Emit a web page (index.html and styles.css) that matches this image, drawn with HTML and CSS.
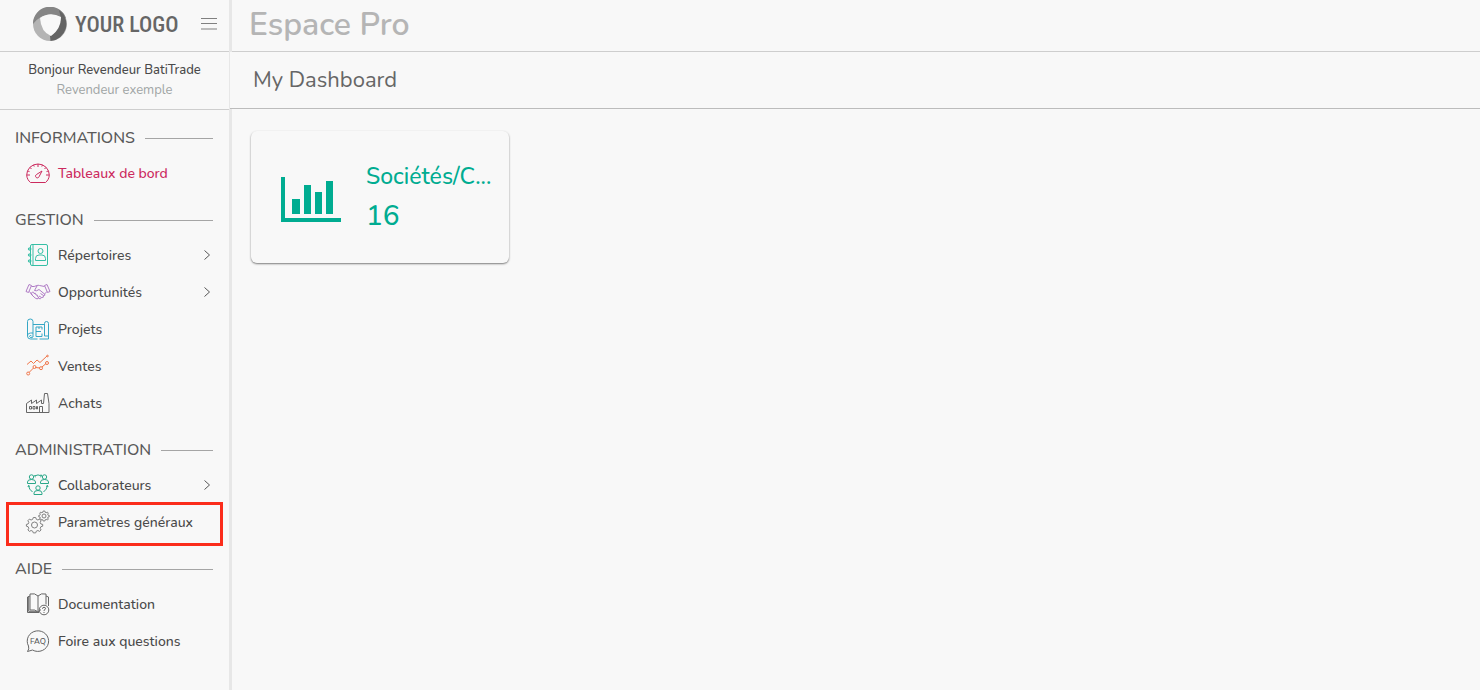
FILE: index.html
```html
<!DOCTYPE html>
<html lang="fr">
<head>
  <meta charset="UTF-8" />
  <meta name="viewport" content="width=device-width, initial-scale=1.0" />
  <title>Espace Pro</title>
  <link rel="stylesheet" href="styles.css">
</head>
<body>
  <aside class="sidebar">
    <div class="brand">
      <a href="#" class="logo">
        <svg width="34" height="34" viewBox="0 0 34 34">
          <circle cx="17" cy="17" r="17" fill="#b4b4b4" />
          <path d="M0 17A17 17 0 0 1 33 11L27 10Q17 5 8 10Q4 12 0 17Z" fill="#858585" />
          <path d="M26 3A17 17 0 0 1 17.500 34L17 29Q25 26 28 11Z" fill="#646464" />
          <path d="M7 11Q17 4 28 10Q28 22 18 29Q8 25 7 11Z" fill="#f8f8f8" />
        </svg>
        <span>YOUR LOGO</span>
      </a>
      <button class="menu-btn" aria-label="Menu">
        <svg width="16" height="12" viewBox="0 0 16 12" stroke="#808080"><path d="M0 .5H16M0 5.500H16M0 11H16" /></svg>
      </button>
    </div>
    <div class="user">
      <div class="user-name">Bonjour Revendeur BatiTrade</div>
      <div class="user-role">Revendeur exemple</div>
    </div>
    <nav>
      <h3>INFORMATIONS</h3>
      <a href="#" class="item active">
        <svg class="icon pink" viewBox="0 0 24 24">
          <path d="M4.500 21.500H19.500C21.500 20 23.300 17 23.300 14A11.300 11 0 0 0 .7 14C.7 17 2.500 20 4.500 21.500Z" />
          <path d="M12 3V6M1 14H4M20 14H23M4 6.500L5.500 8M20 6.500L18.500 8M7.500 4L8.200 5.500M16.500 4L15.800 5.500M2 10L3.500 10.600M22 10L20.500 10.600M16 10L10.500 13.500A1.800 1.800 0 1 0 13 15.800Z" />
        </svg>
        <span>Tableaux de bord</span>
      </a>

      <h3>GESTION</h3>
      <a href="#" class="item">
        <svg class="icon teal" viewBox="0 0 24 24">
          <rect x="4.500" y="1.500" width="17" height="21" rx="1.500" />
          <path d="M7 1.500V22.500M2.500 6H5.500M2.500 12H5.500M2.500 18H5.500" />
          <circle cx="3.500" cy="6" r="1.200" /><circle cx="3.500" cy="12" r="1.200" /><circle cx="3.500" cy="18" r="1.200" />
          <circle cx="14.500" cy="8" r="2.500" />
          <path d="M9.500 17.500V15.500Q9.500 12 13 12H16Q19.500 12 19.500 15.500V17.500Z" />
        </svg>
        <span>Répertoires</span>
        <svg class="arrow" viewBox="0 0 6 10"><path d="M.5 .5L5.500 5L.5 9.500" /></svg>
      </a>
      <a href="#" class="item">
        <svg class="icon purple" viewBox="0 0 24 24">
          <path d="M3 4.500L0 11.500L2.500 12.500L5.500 5.500ZM21 4.500L24 11.500L21.500 12.500L18.500 5.500Z" />
          <path d="M5.500 6.500Q8 7 11 5.500Q12 5 13.500 5.500L18.500 6.500M3.500 11.500L6 15M21 11.500L18.500 14L13 9.500Q10.500 11.500 8.500 10.500L11 6" />
          <path d="M6 15Q4.500 13 6.500 12Q8 11.800 8 13.500Q10 12.500 10 15Q12 14.500 11.500 16.500Q13.500 16.500 12 18.500Q10.500 20 6 15ZM12.500 18.500Q15 19.500 15.500 17.500Q18 18 17.500 15.500Q20 15.500 18.500 14M13 16L15.500 17.500M14.500 13.500L17.500 15.500" />
        </svg>
        <span>Opportunités</span>
        <svg class="arrow" viewBox="0 0 6 10"><path d="M.5 .5L5.500 5L.5 9.500" /></svg>
      </a>
      <a href="#" class="item">
        <svg class="icon blue" viewBox="0 0 24 24">
          <path d="M1.500 19V4.500Q1.500 2 4.300 2Q7 2 7 4.500V16Q1.500 15.500 1.500 19Q1.500 22 4.500 22H11.500M13.500 22H22.500V6.500Q22.500 4.500 20.500 4.500Q18.500 4.500 18.500 6.500V19" />
          <path d="M7 7.500H18.500M7 16V20Q4.500 22 3.500 19.500Q4 17.500 5.500 19M18.500 19H22M16 10H10V19.500H16M10 14.500H15M16 10V12.500M16 16.500V19.500M13 10V12" />
        </svg>
        <span>Projets</span>
      </a>
      <a href="#" class="item">
        <svg class="icon orange" viewBox="0 0 24 24">
          <path d="M1 10.500L5 7L7.500 9.500L11 6L14 8.500L21 2M3 18.500L7.500 14M9.500 13.500L14 14M16 13L20 9.500" />
          <circle cx="21.500" cy="2" r=".8" />
          <circle cx="2.200" cy="19.500" r="1.500" /><circle cx="8.500" cy="13" r="1.500" /><circle cx="15" cy="14.200" r="1.500" /><circle cx="21" cy="9" r="1.500" />
        </svg>
        <span>Ventes</span>
      </a>
      <a href="#" class="item">
        <svg class="icon" viewBox="0 0 24 24">
          <path d="M.5 21.500V12.500L5.500 9V12.500L10.500 9V12.500L15.500 9V12.500H17.500L18.500 2.500H21.500L23 12.500V21.500Z" />
          <path d="M3.500 15.500H5.500V18H3.500ZM7 15.500H9V18H7ZM10.500 15.500H11.500V18H10.500ZM13.500 21.500V15.500H16.500V21.500" />
        </svg>
        <span>Achats</span>
      </a>

      <h3>ADMINISTRATION</h3>
      <a href="#" class="item">
        <svg class="icon green" viewBox="0 0 24 24">
          <circle cx="5.500" cy="4" r="2.200" /><circle cx="18.500" cy="4" r="2.200" /><circle cx="12" cy="15" r="2.200" />
          <path d="M1.500 10.500V9Q1.500 6.500 5.500 6.500Q9.500 6.500 9.500 9V10.500ZM14.500 10.500V9Q14.500 6.500 18.500 6.500Q22.500 6.500 22.500 9V10.500ZM8 21.500V20Q8 17.500 12 17.500Q16 17.500 16 20V21.500Z" />
          <path d="M8.500 3Q12 .8 15.500 3M2.500 12.500Q3 16.500 6.500 19M21.500 12.500Q21 16.500 17.500 19M9.500 2L8.500 3L9.700 4M15 1.500L15.500 3L14.300 4M2 14L2.500 12.500L4 13.500M22 14L21.500 12.500L20 13.500" />
        </svg>
        <span>Collaborateurs</span>
        <svg class="arrow" viewBox="0 0 6 10"><path d="M.5 .5L5.500 5L.5 9.500" /></svg>
      </a>
      <a href="#" class="item highlight">
        <svg class="icon grey" viewBox="0 0 24 24">
          <circle cx="8.500" cy="15" r="3" /><circle cx="18" cy="6" r="2" />
          <path d="M7.300 7.500H9.700L10.300 9.300L11.900 10L13.600 9.100L15.100 10.700L14.200 12.400L14.900 14L16.700 14.400V16.200L14.900 16.700L14.200 18.300L15.100 20L13.600 21.400L11.900 20.500L10.300 21.200L9.700 22.900H7.300L6.700 21.200L5.100 20.500L3.400 21.400L1.900 20L2.800 18.300L2.100 16.700L.4 16.200V14.400L2.100 14L2.800 12.400L1.900 10.700L3.400 9.100L5.100 10L6.700 9.300Z" />
          <path d="M17.200 1H18.800L19.200 2.300L20.200 2.700L21.400 2.100L22.300 3.100L21.700 4.200L22.100 5.200L23.300 5.500V6.700L22.100 7L21.700 8L22.300 9.100L21.400 10L20.200 9.400L19.200 9.800L18.800 11H17.200L16.800 9.800L15.800 9.400L14.700 10L13.700 9.100L14.300 8L13.900 7L12.700 6.700V5.500L13.900 5.200L14.300 4.200L13.700 3.100L14.700 2.100L15.800 2.700L16.800 2.300Z" />
        </svg>
        <span>Paramètres généraux</span>
      </a>

      <h3>AIDE</h3>
      <a href="#" class="item">
        <svg class="icon" viewBox="0 0 24 24">
          <path d="M12 4Q9 .8 4 2V18Q9 17 12 20Q13 18 15 17.800M12 4V19.500M12 4Q15 .8 20 2V12.500M4 4L1.500 5V20.500H13M20 4L22.500 5V14M2.700 4.500V19.300H11" />
          <circle cx="18" cy="18" r="4.800" />
          <path d="M16.500 16.800Q16.500 15.300 18 15.300Q19.700 15.300 19.500 16.800Q19.300 17.600 18 18.300V19M18 20V21" />
        </svg>
        <span>Documentation</span>
      </a>
      <a href="#" class="item">
        <svg class="icon" viewBox="0 0 24 24">
          <path d="M2.500 17A10.700 10.300 0 1 1 6.500 21L1.500 22.500Q3.500 20 2.500 17Z" />
          <text class="faq" x="12" y="15">FAQ</text>
        </svg>
        <span>Foire aux questions</span>
      </a>
    </nav>
  </aside>

  <main>
    <header>Espace Pro</header>
    <h1>My Dashboard</h1>
    <div class="cards">
      <a href="#" class="card">
        <svg width="60" height="45" viewBox="0 0 60 45" fill="#00ac91">
          <path d="M0 0H4V41H60V45H0ZM11 22H19V37H11ZM23 8H30V37H23ZM34 15H41V37H34ZM45 4H52V37H45Z" />
        </svg>
        <div>
          <div class="card-title">Sociétés/C...</div>
          <div class="card-value">16</div>
        </div>
      </a>
    </div>
  </main>
</body>
</html>
```
FILE: styles.css
```css
* {
  box-sizing: border-box;
}
body {
  display: flex;
  min-height: 100vh;
  margin: 0;
  background-color: #f8f8f8;
  color: #4a4a4a;
  font-family: Nunito, Lato, sans-serif;
  font-size: 14px;
}
a {
  color: inherit;
  text-decoration: none;
}
.sidebar {
  flex: none;
  width: 232px;
  border-right: 3px solid #e7e7e7;
}
.brand {
  display: flex;
  align-items: center;
  justify-content: space-between;
  height: 52px;
  padding: 0 12px 3px 33px;
  border-bottom: 1px solid #cecece;
}
.logo {
  display: flex;
  align-items: center;
  gap: 8px;
  color: #666;
  font-family: "Roboto Condensed", "Liberation Sans Narrow", Roboto, sans-serif;
  font-size: 22px;
  font-weight: 500;
  white-space: nowrap;
}
.menu-btn {
  display: flex;
  padding: 0;
  border: none;
  background: none;
  cursor: pointer;
}
.user {
  height: 58px;
  padding-top: 8px;
  border-bottom: 1px solid #cecece;
  text-align: center;
  font-size: 13px;
  line-height: 20px;
}
.user-name {
  font-weight: 500;
}
.user-role {
  color: #a0a5a5;
}
nav {
  display: flex;
  flex-direction: column;
}
h3 {
  display: flex;
  align-items: center;
  gap: 10px;
  margin: 16px 16px 4px 15px;
  color: #5a5a5a;
  font-size: 16px;
  font-weight: 500;
  line-height: 25px;
}
/* trait à droite du titre */
h3::after {
  content: "";
  flex: 1;
  height: 1px;
  background-color: #a5a5a5;
}
.item {
  position: relative;
  display: flex;
  align-items: center;
  gap: 8px;
  height: 36px;
  margin-bottom: 1px;
  padding: 0 19px 0 26px;
  font-weight: 500;
}
.item.active {
  color: #cc2a5e;
}
.icon {
  width: 24px;
  height: 24px;
  overflow: visible;
  fill: none;
  stroke: #666;
  stroke-width: 1;
}
.pink { stroke: #cc2a5e; }
.teal { stroke: #35bfa5; }
.purple { stroke: #b07cc6; }
.blue { stroke: #35a7c5; }
.orange { stroke: #f0764a; }
.green { stroke: #2aa889; }
.grey { stroke: #808080; }
.faq {
  fill: #555;
  stroke: none;
  font-size: 8px;
  text-anchor: middle;
}
.arrow {
  width: 6px;
  height: 10px;
  margin-left: auto;
  fill: none;
  stroke: #555;
}
/* cadre rouge autour de l'entrée */
.highlight::after {
  content: "";
  position: absolute;
  inset: -2px 6px -6px;
  border: 3px solid #fb2c1b;
}
main {
  flex: 1;
  min-width: 0;
}
header {
  height: 52px;
  padding-left: 17px;
  border-bottom: 1px solid #cecece;
  color: #b5b5b5;
  font-size: 32px;
  font-weight: 600;
  line-height: 50px;
}
/* la barre de titre recouvre la bordure du menu */
h1 {
  height: 57px;
  margin: 0 0 0 -2px;
  padding-left: 23px;
  border-bottom: 1px solid #bcbcbc;
  background-color: #f8f8f8;
  color: #666;
  font-size: 22px;
  font-weight: 400;
  line-height: 57px;
}
.cards {
  display: flex;
  padding: 22px 19px;
}
.card {
  display: flex;
  align-items: center;
  gap: 25px;
  width: 258px;
  height: 132px;
  padding: 0 20px 0 30px;
  border-radius: 6px;
  box-shadow: 0 1px 2px rgba(0, 0, 0, 0.5);
  background-color: #f8f8f8;
  color: #00ac91;
  white-space: nowrap;
}
.card svg {
  flex: none;
  margin-top: 4px;
}
.card-title {
  font-size: 23px;
  font-weight: 500;
  line-height: 38px;
}
.card-value {
  font-size: 28px;
  font-weight: 500;
  line-height: 40px;
}
```
